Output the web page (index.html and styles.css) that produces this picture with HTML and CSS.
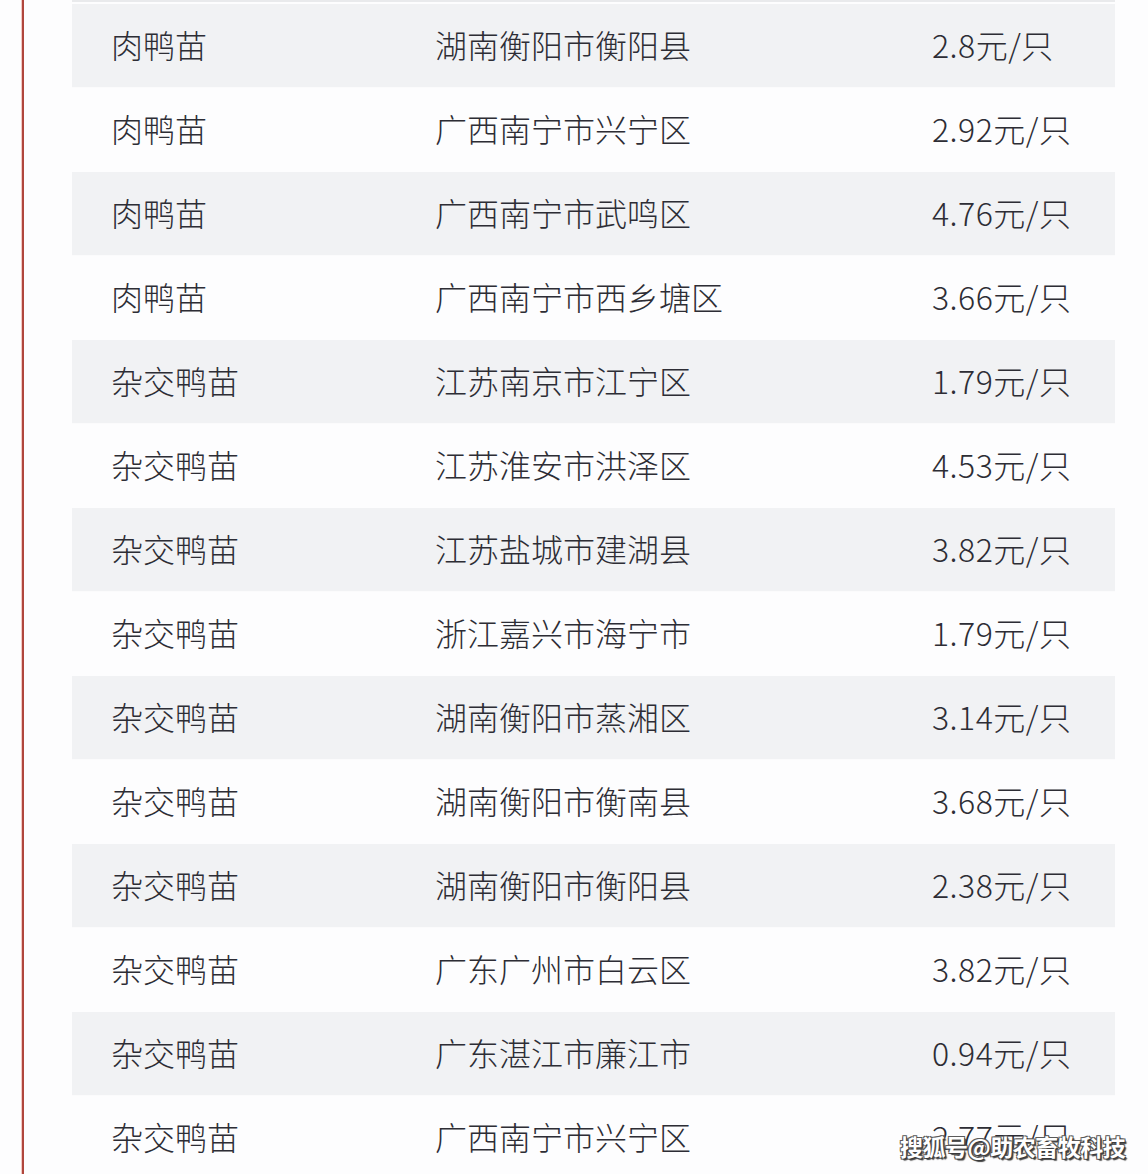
FILE: index.html
```html
<!DOCTYPE html>
<html lang="zh-CN">
<head>
<meta charset="utf-8">
<title>鸭苗价格</title>
<link rel="stylesheet" href="styles.css">
</head>
<body>
<div class="page">
  <div class="sheet">
    <div class="top-edge"></div>
    <div class="row"><span class="c1">肉鸭苗</span><span class="c2">湖南衡阳市衡阳县</span><span class="c3">2.8元/只</span></div>
    <div class="row"><span class="c1">肉鸭苗</span><span class="c2">广西南宁市兴宁区</span><span class="c3">2.92元/只</span></div>
    <div class="row"><span class="c1">肉鸭苗</span><span class="c2">广西南宁市武鸣区</span><span class="c3">4.76元/只</span></div>
    <div class="row"><span class="c1">肉鸭苗</span><span class="c2">广西南宁市西乡塘区</span><span class="c3">3.66元/只</span></div>
    <div class="row"><span class="c1">杂交鸭苗</span><span class="c2">江苏南京市江宁区</span><span class="c3">1.79元/只</span></div>
    <div class="row"><span class="c1">杂交鸭苗</span><span class="c2">江苏淮安市洪泽区</span><span class="c3">4.53元/只</span></div>
    <div class="row"><span class="c1">杂交鸭苗</span><span class="c2">江苏盐城市建湖县</span><span class="c3">3.82元/只</span></div>
    <div class="row"><span class="c1">杂交鸭苗</span><span class="c2">浙江嘉兴市海宁市</span><span class="c3">1.79元/只</span></div>
    <div class="row"><span class="c1">杂交鸭苗</span><span class="c2">湖南衡阳市蒸湘区</span><span class="c3">3.14元/只</span></div>
    <div class="row"><span class="c1">杂交鸭苗</span><span class="c2">湖南衡阳市衡南县</span><span class="c3">3.68元/只</span></div>
    <div class="row"><span class="c1">杂交鸭苗</span><span class="c2">湖南衡阳市衡阳县</span><span class="c3">2.38元/只</span></div>
    <div class="row"><span class="c1">杂交鸭苗</span><span class="c2">广东广州市白云区</span><span class="c3">3.82元/只</span></div>
    <div class="row"><span class="c1">杂交鸭苗</span><span class="c2">广东湛江市廉江市</span><span class="c3">0.94元/只</span></div>
    <div class="row"><span class="c1">杂交鸭苗</span><span class="c2">广西南宁市兴宁区</span><span class="c3">2.77元/只</span></div>
  </div>
  <div class="watermark">搜狐号@助农畜牧科技</div>
</div>
</body>
</html>
```

FILE: styles.css
```css
html, body {
  margin: 0;
  padding: 0;
  background: #fdfdfe;
}
body {
  width: 1148px;
  height: 1174px;
  overflow: hidden;
  font-family: "Noto Sans CJK SC", "Noto Sans", sans-serif;
  color: #2d2d35;
}
.page {
  position: relative;
  margin-left: 22px;
  border-left: 2px solid #b0463d;
  box-shadow: -1px 0 0 #f3c9c2, 1px 0 0 #f6dcd7;
  height: 1174px;
  padding-left: 48px;
}
.sheet {
  width: 1043px;
}
.top-edge {
  height: 2px;
  background: #e9eaec;
  margin-bottom: 2px;
}
.row {
  display: grid;
  grid-template-columns: 324px 497px 1fr;
  align-items: center;
  height: 84px;
  padding-left: 39px;
  padding-bottom: 4px;
  font-size: 32px;
  font-weight: 300;
  line-height: 1;
  box-sizing: border-box;
}
.row:nth-child(even) {
  background: #f1f2f4;
  border-bottom: 1px solid #fbfbfc;
}
.c1, .c2, .c3 {
  white-space: nowrap;
}
.c3 {
  letter-spacing: 0.5px;
}
.watermark {
  position: absolute;
  left: 876px;
  top: 1131px;
  font-size: 23px;
  font-weight: 700;
  line-height: 30px;
  color: #ffffff;
  letter-spacing: -0.5px;
  text-shadow: 1px 1px 0 #3a3a3a, -1px -1px 0 #5a5a5a, 1px -1px 0 #5a5a5a, -1px 1px 0 #5a5a5a, 2px 2px 1px #444;
}
```
